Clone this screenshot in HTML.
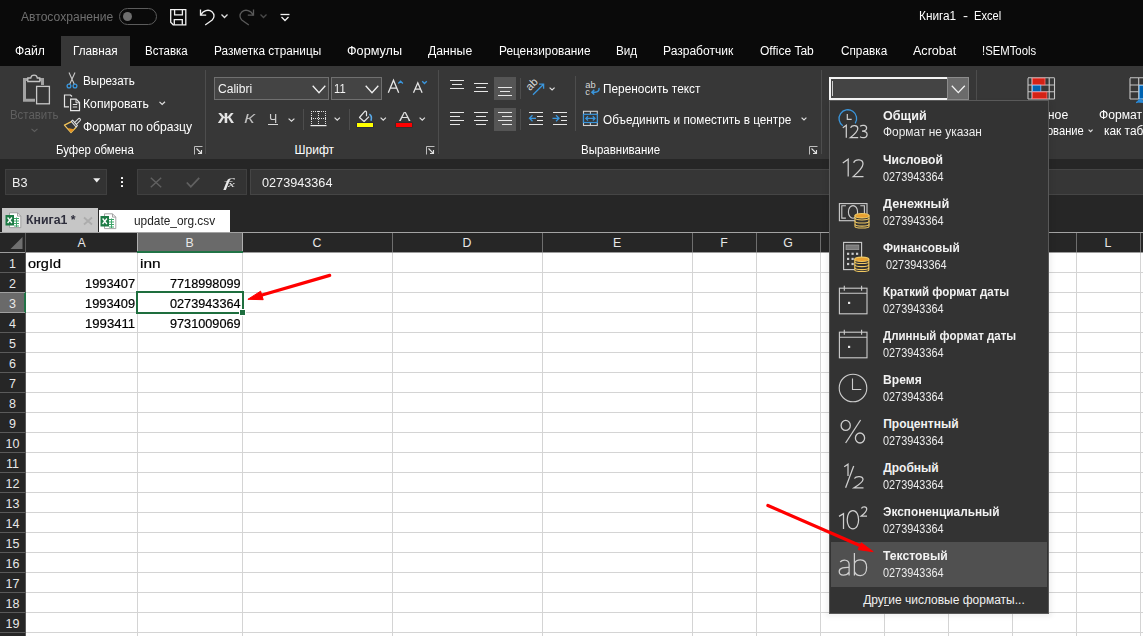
<!DOCTYPE html>
<html><head><meta charset="utf-8"><style>
html,body{margin:0;padding:0;width:1143px;height:636px;overflow:hidden;background:#0a0a0a;font-family:'Liberation Sans', sans-serif;}
svg{position:absolute;overflow:visible}
</style></head><body>
<div style="position:absolute;left:0px;top:0px;width:1143px;height:66px;background:#0a0a0a;"></div>
<div style="position:absolute;left:61px;top:36px;width:69px;height:30px;background:#373737;"></div>
<div style="position:absolute;left:0px;top:66px;width:1143px;height:93px;background:#373737;"></div>
<div style="position:absolute;left:0px;top:159px;width:1143px;height:73px;background:#262626;"></div>
<div style="position:absolute;left:119px;top:8px;width:38px;height:17px;background:transparent;box-sizing:border-box;border:1px solid #5c5c5c;border-radius:9px"></div>
<div style="position:absolute;left:122.5px;top:11.5px;width:9px;height:9px;background:#6e6e6e;border-radius:50%"></div>
<svg style="left:170px;top:9px;" width="17" height="17" viewBox="0 0 17 17"><path d="M0.7 0.7H15.8V15.8H3.2L0.7 13.3Z" fill="none" stroke="#f2f2f2" stroke-width="1.3"/><path d="M4.6 0.7V5.8H12.4V0.7" fill="none" stroke="#f2f2f2" stroke-width="1.3"/><path d="M4.3 15.8V10.6H12.3V15.8" fill="none" stroke="#f2f2f2" stroke-width="1.3"/></svg>
<svg style="left:199px;top:8px;" width="18" height="18" viewBox="0 0 18 18"><path d="M1.5 1.5V7.2H7.2" fill="none" stroke="#f2f2f2" stroke-width="1.3"/><path d="M1.8 7.2C3.8 2.5 9.5 0.8 13 3.8C15.8 6.5 15.5 9.8 13.2 12L6.2 17" fill="none" stroke="#f2f2f2" stroke-width="1.3"/></svg>
<svg style="left:221px;top:14px;" width="7" height="5" viewBox="0 0 7 5"><path d="M0.5 0.5L3.5 3.5L6.5 0.5" fill="none" stroke="#e0e0e0" stroke-width="1.3"/></svg>
<svg style="left:238px;top:8px;" width="18" height="18" viewBox="0 0 18 18"><path d="M15.5 1.5V7.2H9.8" fill="none" stroke="#5a5a5a" stroke-width="1.3"/><path d="M15.2 7.2C13.2 2.5 7.5 0.8 4 3.8C1.2 6.5 1.5 9.8 3.8 12L10.8 17" fill="none" stroke="#5a5a5a" stroke-width="1.3"/></svg>
<svg style="left:260px;top:14px;" width="7" height="5" viewBox="0 0 7 5"><path d="M0.5 0.5L3.5 3.5L6.5 0.5" fill="none" stroke="#4a4a4a" stroke-width="1.3"/></svg>
<svg style="left:280px;top:13px;" width="10" height="9" viewBox="0 0 10 9"><path d="M0.5 1.5H9.5" stroke="#f2f2f2" stroke-width="1.3"/><path d="M1.5 4L5 7.5L8.5 4" fill="none" stroke="#f2f2f2" stroke-width="1.3"/></svg>
<svg style="left:18px;top:70px;" width="40" height="40" viewBox="0 0 40 40"><path d="M17 30.3H6.5V9.5H24.5V15" fill="none" stroke="#a3a3a3" stroke-width="3"/><path d="M9.8 11.5V8H12.8C13.3 4.2 18.8 4.2 19.3 8H21.8V11.5Z" fill="#373737" stroke="#c4c4c4" stroke-width="1.3"/><rect x="18.6" y="16.4" width="12.8" height="17.4" fill="#373737" stroke="#c8c8c8" stroke-width="1.3"/></svg>
<svg style="left:31px;top:128px;" width="7" height="5" viewBox="0 0 7 5"><path d="M0.5 0.8L3.5 3.5L6.5 0.8" fill="none" stroke="#5f5f5f" stroke-width="1.1"/></svg>
<svg style="left:64px;top:71px;" width="16" height="19" viewBox="0 0 16 19"><path d="M5 1.5L10.3 13.3M11 1.5L5.7 13.3" stroke="#c8c8c8" stroke-width="1.1"/><circle cx="5" cy="15" r="1.9" fill="none" stroke="#3a96dd" stroke-width="1.3"/><circle cx="11" cy="15" r="1.9" fill="none" stroke="#3a96dd" stroke-width="1.3"/></svg>
<svg style="left:62px;top:93px;" width="20" height="20" viewBox="0 0 20 20"><path d="M7 13.8H2.5V2H8.5L10 3.5" fill="none" stroke="#e6e6e6" stroke-width="1.2"/><path d="M8.6 6.2H14.2L17.5 9.5V17.6H8.6Z" fill="#373737" stroke="#e6e6e6" stroke-width="1.2"/><path d="M14 6.2V9.8H17.5" fill="none" stroke="#e6e6e6" stroke-width="1"/><path d="M10.8 11.5H15.2M10.8 14H15.2" stroke="#e6e6e6" stroke-width="1"/></svg>
<svg style="left:159px;top:101px;" width="7" height="5" viewBox="0 0 7 5"><path d="M0.5 0.8L3.2 3.5L6 0.8" fill="none" stroke="#e0e0e0" stroke-width="1.2"/></svg>
<svg style="left:62px;top:114px;" width="22" height="22" viewBox="0 0 22 22"><path d="M9.4 7.6L2.4 11.1L9 18.6L14.3 13" fill="none" stroke="#f2c45a" stroke-width="1.2" stroke-linejoin="round"/><path d="M5.8 14L9 18.3L12 15.3Z" fill="#e8901a"/><path d="M9.3 7.4L10.6 6.1L15.4 11.7L14.1 13Z" fill="#373737" stroke="#dcdcdc" stroke-width="1.1" stroke-linejoin="round"/><path d="M12.3 8.9L16.3 4.9C16.8 4.4 17.6 4.4 18.1 4.9C18.6 5.4 18.6 6.2 18.1 6.7L14.1 10.7" fill="none" stroke="#dcdcdc" stroke-width="1.1"/></svg>
<svg style="left:194px;top:146px;" width="9" height="9" viewBox="0 0 9 9"><path d="M0.5 8.5V0.5H8.5" fill="none" stroke="#bdbdbd" stroke-width="1"/><path d="M2.5 2.5L7.5 7.5M4 7.5H7.5V4" fill="none" stroke="#e0e0e0" stroke-width="1.1"/></svg>
<div style="position:absolute;left:205px;top:70px;width:1px;height:84px;background:#4d4d4d;"></div>
<div style="position:absolute;left:214px;top:77px;width:115px;height:23px;background:#444444;box-sizing:border-box;border:1px solid #707070"></div>
<svg style="left:312px;top:85px;" width="14" height="9" viewBox="0 0 14 9"><path d="M0.7 0.8L7 7.8L13.3 0.8" fill="none" stroke="#f0f0f0" stroke-width="1.3"/></svg>
<div style="position:absolute;left:331px;top:77px;width:51px;height:23px;background:#444444;box-sizing:border-box;border:1px solid #707070"></div>
<svg style="left:365px;top:85px;" width="14" height="9" viewBox="0 0 14 9"><path d="M0.7 0.8L7 7.8L13.3 0.8" fill="none" stroke="#f0f0f0" stroke-width="1.3"/></svg>
<svg style="left:387px;top:79px;" width="18" height="15" viewBox="0 0 18 15"><path d="M1.3 13.8L6.5 1.2L11.7 13.8M3.3 9.2H9.7" fill="none" stroke="#e6e6e6" stroke-width="1.3"/><path d="M11.3 4.5L13.6 2.2L15.9 4.5" fill="none" stroke="#3a96dd" stroke-width="1.3"/></svg>
<svg style="left:412px;top:79px;" width="17" height="15" viewBox="0 0 17 15"><path d="M1.5 13.8L5.8 3.8L10.1 13.8M3.1 10.2H8.5" fill="none" stroke="#e6e6e6" stroke-width="1.3"/><path d="M10.2 2.2L12.5 4.5L14.8 2.2" fill="none" stroke="#3a96dd" stroke-width="1.3"/></svg>
<div style="position:absolute;left:268px;top:124px;width:10px;height:1.2px;background:#d8d8d8;"></div>
<svg style="left:287.5px;top:117.5px;" width="7" height="4" viewBox="0 0 7 4"><path d="M0.6 0.6L3.5 3.2L6.4 0.6" fill="none" stroke="#e0e0e0" stroke-width="1.2"/></svg>
<div style="position:absolute;left:303px;top:109px;width:1px;height:21px;background:#4d4d4d;"></div>
<svg style="left:310px;top:110px;" width="17" height="17" viewBox="0 0 17 17"><g fill="#e0e0e0"><rect x="1" y="1" width="1" height="1"/><rect x="1" y="1" width="1" height="1"/><rect x="15" y="1" width="1" height="1"/><rect x="1" y="8" width="1" height="1"/><rect x="8" y="1" width="1" height="1"/><rect x="3" y="1" width="1" height="1"/><rect x="1" y="3" width="1" height="1"/><rect x="15" y="3" width="1" height="1"/><rect x="3" y="8" width="1" height="1"/><rect x="8" y="3" width="1" height="1"/><rect x="5" y="1" width="1" height="1"/><rect x="1" y="5" width="1" height="1"/><rect x="15" y="5" width="1" height="1"/><rect x="5" y="8" width="1" height="1"/><rect x="8" y="5" width="1" height="1"/><rect x="7" y="1" width="1" height="1"/><rect x="1" y="7" width="1" height="1"/><rect x="15" y="7" width="1" height="1"/><rect x="7" y="8" width="1" height="1"/><rect x="8" y="7" width="1" height="1"/><rect x="9" y="1" width="1" height="1"/><rect x="1" y="9" width="1" height="1"/><rect x="15" y="9" width="1" height="1"/><rect x="9" y="8" width="1" height="1"/><rect x="8" y="9" width="1" height="1"/><rect x="11" y="1" width="1" height="1"/><rect x="1" y="11" width="1" height="1"/><rect x="15" y="11" width="1" height="1"/><rect x="11" y="8" width="1" height="1"/><rect x="8" y="11" width="1" height="1"/><rect x="13" y="1" width="1" height="1"/><rect x="1" y="13" width="1" height="1"/><rect x="15" y="13" width="1" height="1"/><rect x="13" y="8" width="1" height="1"/><rect x="8" y="13" width="1" height="1"/><rect x="15" y="1" width="1" height="1"/><rect x="1" y="15" width="1" height="1"/><rect x="15" y="15" width="1" height="1"/><rect x="15" y="8" width="1" height="1"/><rect x="8" y="15" width="1" height="1"/></g><rect x="0.5" y="15" width="16" height="1.2" fill="#f0f0f0"/></svg>
<svg style="left:333.8px;top:117.0px;" width="6.5" height="4" viewBox="0 0 6.5 4"><path d="M0.6 0.6L3.25 3.2L5.9 0.6" fill="none" stroke="#e0e0e0" stroke-width="1.2"/></svg>
<div style="position:absolute;left:349px;top:109px;width:1px;height:21px;background:#4d4d4d;"></div>
<svg style="left:352px;top:106px;" width="24" height="18" viewBox="0 0 24 18"><path d="M14.5 10.2V6.2C14.3 4.8 13 4.8 12.3 5.8L7.5 11.5L12.1 15.5L17 10.6" fill="none" stroke="#e4e4e4" stroke-width="1.2" stroke-linejoin="round"/><path d="M17.3 8.3C19.3 9.3 19.8 12 19 14.8" fill="none" stroke="#5aaae8" stroke-width="1.6"/></svg>
<div style="position:absolute;left:356.5px;top:122.8px;width:16.5px;height:4.2px;background:#ffff00;box-shadow:0 0 0 0.6px #24243a"></div>
<svg style="left:379.7px;top:117.0px;" width="6.5" height="4" viewBox="0 0 6.5 4"><path d="M0.6 0.6L3.25 3.2L5.9 0.6" fill="none" stroke="#e0e0e0" stroke-width="1.2"/></svg>
<div style="position:absolute;left:396px;top:122.8px;width:16px;height:4.2px;background:#ff0000;box-shadow:0 0 0 0.6px #3a2424"></div>
<svg style="left:418.9px;top:117.0px;" width="6.5" height="4" viewBox="0 0 6.5 4"><path d="M0.6 0.6L3.25 3.2L5.9 0.6" fill="none" stroke="#e0e0e0" stroke-width="1.2"/></svg>
<svg style="left:426px;top:146px;" width="9" height="9" viewBox="0 0 9 9"><path d="M0.5 8.5V0.5H8.5" fill="none" stroke="#bdbdbd" stroke-width="1"/><path d="M2.5 2.5L7.5 7.5M4 7.5H7.5V4" fill="none" stroke="#e0e0e0" stroke-width="1.1"/></svg>
<div style="position:absolute;left:438px;top:70px;width:1px;height:84px;background:#4d4d4d;"></div>
<div style="position:absolute;left:494px;top:77px;width:22px;height:23px;background:#555555;"></div>
<div style="position:absolute;left:494px;top:108px;width:22px;height:23px;background:#555555;"></div>
<div style="position:absolute;left:450px;top:79.7px;width:14px;height:1.2px;background:#e6e6e6;"></div>
<div style="position:absolute;left:452.2px;top:83.80000000000001px;width:9.800000000000011px;height:1.2px;background:#e6e6e6;"></div>
<div style="position:absolute;left:450px;top:87.80000000000001px;width:14px;height:1.2px;background:#e6e6e6;"></div>
<div style="position:absolute;left:474px;top:82.7px;width:14px;height:1.2px;background:#e6e6e6;"></div>
<div style="position:absolute;left:476.4px;top:86.80000000000001px;width:9.600000000000023px;height:1.2px;background:#e6e6e6;"></div>
<div style="position:absolute;left:474px;top:90.80000000000001px;width:14px;height:1.2px;background:#e6e6e6;"></div>
<div style="position:absolute;left:498px;top:86.80000000000001px;width:14px;height:1.2px;background:#e6e6e6;"></div>
<div style="position:absolute;left:500.4px;top:90.80000000000001px;width:9.600000000000023px;height:1.2px;background:#e6e6e6;"></div>
<div style="position:absolute;left:498px;top:94.80000000000001px;width:14px;height:1.2px;background:#e6e6e6;"></div>
<div style="position:absolute;left:520px;top:78px;width:1px;height:21px;background:#4d4d4d;"></div>
<svg style="left:526px;top:78px;" width="20" height="18" viewBox="0 0 20 18"><text x="0" y="0" transform="translate(4 13.2) rotate(-45)" font-family="Liberation Sans" font-size="11" fill="#dcdcdc">ab</text><path d="M7 16.8L17.6 6.2M13 6.2H17.6V10.8" fill="none" stroke="#3a96dd" stroke-width="1.3"/></svg>
<svg style="left:548.8px;top:86.5px;" width="6.2" height="3.8" viewBox="0 0 6.2 3.8"><path d="M0.6 0.6L3.1 3.0L5.6000000000000005 0.6" fill="none" stroke="#e0e0e0" stroke-width="1.2"/></svg>
<div style="position:absolute;left:450px;top:111.60000000000001px;width:14px;height:1.2px;background:#e6e6e6;"></div>
<div style="position:absolute;left:450px;top:115.7px;width:10px;height:1.2px;background:#e6e6e6;"></div>
<div style="position:absolute;left:450px;top:119.80000000000001px;width:14px;height:1.2px;background:#e6e6e6;"></div>
<div style="position:absolute;left:450px;top:123.80000000000001px;width:10px;height:1.2px;background:#e6e6e6;"></div>
<div style="position:absolute;left:474px;top:111.60000000000001px;width:14px;height:1.2px;background:#e6e6e6;"></div>
<div style="position:absolute;left:476.4px;top:115.7px;width:9.600000000000023px;height:1.2px;background:#e6e6e6;"></div>
<div style="position:absolute;left:474px;top:119.80000000000001px;width:14px;height:1.2px;background:#e6e6e6;"></div>
<div style="position:absolute;left:476.4px;top:123.80000000000001px;width:9.600000000000023px;height:1.2px;background:#e6e6e6;"></div>
<div style="position:absolute;left:498px;top:111.60000000000001px;width:14px;height:1.2px;background:#e6e6e6;"></div>
<div style="position:absolute;left:502px;top:115.7px;width:10px;height:1.2px;background:#e6e6e6;"></div>
<div style="position:absolute;left:498px;top:119.80000000000001px;width:14px;height:1.2px;background:#e6e6e6;"></div>
<div style="position:absolute;left:502px;top:123.80000000000001px;width:10px;height:1.2px;background:#e6e6e6;"></div>
<div style="position:absolute;left:520px;top:109px;width:1px;height:21px;background:#4d4d4d;"></div>
<div style="position:absolute;left:529px;top:111.60000000000001px;width:14px;height:1.2px;background:#e6e6e6;"></div>
<div style="position:absolute;left:537px;top:115.7px;width:6px;height:1.2px;background:#e6e6e6;"></div>
<div style="position:absolute;left:537px;top:119.80000000000001px;width:6px;height:1.2px;background:#e6e6e6;"></div>
<div style="position:absolute;left:529px;top:123.80000000000001px;width:14px;height:1.2px;background:#e6e6e6;"></div>
<div style="position:absolute;left:553px;top:111.60000000000001px;width:14px;height:1.2px;background:#e6e6e6;"></div>
<div style="position:absolute;left:561px;top:115.7px;width:6px;height:1.2px;background:#e6e6e6;"></div>
<div style="position:absolute;left:561px;top:119.80000000000001px;width:6px;height:1.2px;background:#e6e6e6;"></div>
<div style="position:absolute;left:553px;top:123.80000000000001px;width:14px;height:1.2px;background:#e6e6e6;"></div>
<svg style="left:528px;top:114px;" width="9" height="9" viewBox="0 0 9 9"><path d="M8 4.3H1.5M4.5 1.3L1.5 4.3L4.5 7.3" fill="none" stroke="#3a96dd" stroke-width="1.3"/></svg>
<svg style="left:552px;top:114px;" width="9" height="9" viewBox="0 0 9 9"><path d="M0.5 4.3H7M4 1.3L7 4.3L4 7.3" fill="none" stroke="#3a96dd" stroke-width="1.3"/></svg>
<div style="position:absolute;left:575px;top:76px;width:1px;height:55px;background:#4d4d4d;"></div>
<svg style="left:584px;top:80px;" width="18" height="18" viewBox="0 0 18 18"><text x="1.2" y="7.8" font-family="Liberation Sans" font-size="9.4" fill="#d6d6d6">ab</text><text x="1.2" y="15.2" font-family="Liberation Sans" font-size="9.4" fill="#d6d6d6">c</text><path d="M15 7.8C15.5 10.5 14 12.2 11 12.2H8.2M10.3 9.8L7.8 12.2L10.3 14.6" fill="none" stroke="#3a96dd" stroke-width="1.4"/></svg>
<svg style="left:582px;top:110px;" width="17" height="17" viewBox="0 0 17 17"><rect x="1.5" y="1.3" width="13.8" height="14.2" fill="none" stroke="#cfcfcf" stroke-width="1.1"/><path d="M8.4 1.3V4.3M8.4 12.5V15.5" stroke="#cfcfcf" stroke-width="1.1"/><rect x="1.5" y="4.3" width="13.8" height="8.2" fill="#373737" stroke="#3a96dd" stroke-width="1.2"/><path d="M3.8 8.4H13M6 6.3L3.8 8.4L6 10.5M10.8 6.3L13 8.4L10.8 10.5" fill="none" stroke="#3a96dd" stroke-width="1.2"/></svg>
<svg style="left:801.0px;top:117.0px;" width="6" height="3.8" viewBox="0 0 6 3.8"><path d="M0.6 0.6L3.0 3.0L5.4 0.6" fill="none" stroke="#e0e0e0" stroke-width="1.2"/></svg>
<svg style="left:809px;top:146px;" width="9" height="9" viewBox="0 0 9 9"><path d="M0.5 8.5V0.5H8.5" fill="none" stroke="#bdbdbd" stroke-width="1"/><path d="M2.5 2.5L7.5 7.5M4 7.5H7.5V4" fill="none" stroke="#e0e0e0" stroke-width="1.1"/></svg>
<div style="position:absolute;left:821px;top:70px;width:1px;height:84px;background:#4d4d4d;"></div>
<div style="position:absolute;left:829px;top:77px;width:140px;height:23px;background:#444444;box-sizing:border-box;border:2px solid #f4f4f4;border-right:none"></div>
<div style="position:absolute;left:947px;top:77px;width:22px;height:23px;background:#6b6b6b;box-sizing:border-box;border:1px solid #8c8c8c"></div>
<svg style="left:951px;top:85px;" width="15" height="9" viewBox="0 0 15 9"><path d="M0.8 0.8L7.3 7.6L13.8 0.8" fill="none" stroke="#f4f4f4" stroke-width="1.3"/></svg>
<div style="position:absolute;left:832px;top:81px;width:1px;height:15px;background:#d0d0d0;"></div>
<div style="position:absolute;left:976px;top:70px;width:1px;height:84px;background:#4d4d4d;"></div>
<svg style="left:1027px;top:76.5px;" width="29" height="23" viewBox="0 0 29 23"><path d="M1 1.2V22M5 1.2V22M22.2 1.2V22M27.5 1.2V22M1 0.7H27.5M1 8H27.5M1 14.8H27.5M1 22H27.5" fill="none" stroke="#c6c6c6" stroke-width="1.1"/><rect x="5.5" y="1.2" width="12.5" height="6.6" fill="#d42215" stroke="#ff7070" stroke-width="0.8"/><rect x="5.5" y="8.2" width="8.3" height="6.4" fill="#0063b1" stroke="#7cc4ff" stroke-width="0.8"/><rect x="5.5" y="15" width="14.4" height="6.6" fill="#d42215" stroke="#ff7070" stroke-width="0.8"/></svg>
<svg style="left:1087.8px;top:128.7px;" width="5.2" height="3.4" viewBox="0 0 5.2 3.4"><path d="M0.6 0.6L2.6 2.6L4.6000000000000005 0.6" fill="none" stroke="#e0e0e0" stroke-width="1.2"/></svg>
<svg style="left:1128.5px;top:76.5px;" width="20" height="28" viewBox="0 0 20 28"><path d="M1 1.2V22M9.7 1.2V22M1 0.8H20M1 8H20M1 14.8H20M1 22H20" fill="none" stroke="#c6c6c6" stroke-width="1.1"/><rect x="10.2" y="8.4" width="10" height="13.4" fill="#0063b1" stroke="#7cc4ff" stroke-width="0.8"/><path d="M7 25.6C9 25.5 9.5 23 11 22.5C12.5 22 13.5 24 15 26" fill="#2a8ad8" stroke="#2a8ad8" stroke-width="1.4"/></svg>
<div style="position:absolute;left:5px;top:169px;width:102px;height:26px;background:#333333;box-sizing:border-box;border:1px solid #404040"></div>
<svg style="left:92.8px;top:178.3px;" width="8" height="5" viewBox="0 0 8 5"><path d="M0.2 0.2H7.3L3.75 4.5Z" fill="#f0f0f0"/></svg>
<div style="position:absolute;left:121px;top:177px;width:2.2px;height:2.2px;background:#ffffff;border-radius:0.5px"></div>
<div style="position:absolute;left:121px;top:181px;width:2.2px;height:2.2px;background:#ffffff;border-radius:0.5px"></div>
<div style="position:absolute;left:121px;top:185px;width:2.2px;height:2.2px;background:#ffffff;border-radius:0.5px"></div>
<div style="position:absolute;left:137px;top:169px;width:110px;height:26px;background:#333333;box-sizing:border-box;border:1px solid #404040"></div>
<svg style="left:150px;top:176.5px;" width="12" height="11" viewBox="0 0 12 11"><path d="M0.8 0.8L11.2 10.2M11.2 0.8L0.8 10.2" stroke="#616161" stroke-width="1.4"/></svg>
<svg style="left:186px;top:176.5px;" width="14" height="11" viewBox="0 0 14 11"><path d="M0.8 5.5L4.8 9.8L13.2 0.8" fill="none" stroke="#616161" stroke-width="1.8"/></svg>
<div style="position:absolute;left:250px;top:169px;width:900px;height:26px;background:#363636;box-sizing:border-box;border:1px solid #454545"></div>
<div style="position:absolute;left:2px;top:208px;width:96px;height:24px;background:#c6c6c6;"></div>
<div style="position:absolute;left:99px;top:210px;width:131px;height:22px;background:#ffffff;"></div>
<svg style="left:5px;top:211.5px;" width="17" height="17" viewBox="0 0 17 17"><path d="M4.5 0.8H12.5L15.8 4.1V15.6H4.5Z" fill="#ffffff" stroke="#9a9a9a" stroke-width="0.9"/><path d="M12.5 0.8V4.1H15.8" fill="none" stroke="#9a9a9a" stroke-width="0.9"/><path d="M9 6.5H14M9 9H14M9 11.5H14M9 14H14M11.5 5.5V15" stroke="#3fa56a" stroke-width="1"/><rect x="0.5" y="3" width="8.5" height="10.5" fill="#1d7b45"/><path d="M2.6 5.5L6.9 11M6.9 5.5L2.6 11" stroke="#ffffff" stroke-width="1.3"/></svg>
<svg style="left:82.5px;top:216.5px;" width="10" height="8" viewBox="0 0 10 8"><path d="M1 0.5L9 7.5M9 0.5L1 7.5" stroke="#acacac" stroke-width="1.8"/></svg>
<svg style="left:100px;top:212.5px;" width="17" height="17" viewBox="0 0 17 17"><path d="M4.5 0.8H12.5L15.8 4.1V15.6H4.5Z" fill="#ffffff" stroke="#9a9a9a" stroke-width="0.9"/><path d="M12.5 0.8V4.1H15.8" fill="none" stroke="#9a9a9a" stroke-width="0.9"/><path d="M9 6.5H14M9 9H14M9 11.5H14M9 14H14M11.5 5.5V15" stroke="#3fa56a" stroke-width="1"/><rect x="0.5" y="3" width="8.5" height="10.5" fill="#1d7b45"/><path d="M2.6 5.5L6.9 11M6.9 5.5L2.6 11" stroke="#ffffff" stroke-width="1.3"/></svg>
<div style="position:absolute;left:0px;top:232px;width:1143px;height:1px;background:#a3a3a3;"></div>
<div style="position:absolute;left:0px;top:233px;width:1143px;height:19px;background:#262626;"></div>
<div style="position:absolute;left:0px;top:252px;width:1143px;height:1px;background:#9c9c9c;"></div>
<svg style="left:10px;top:236px;" width="13" height="14" viewBox="0 0 13 14"><path d="M12.5 1V13H0.5Z" fill="#6f6f6f"/></svg>
<div style="position:absolute;left:25px;top:233px;width:1px;height:403px;background:#5a5a5a;"></div>
<div style="position:absolute;left:137px;top:233px;width:105px;height:19px;background:#6a6a6a;"></div>
<div style="position:absolute;left:26px;width:111px;top:237.19px;font-size:12.3px;line-height:12.3px;text-align:center;color:#e8e8e8">A</div>
<div style="position:absolute;left:137px;top:233px;width:1px;height:19px;background:#b0b0b0;"></div>
<div style="position:absolute;left:137px;width:105px;top:237.19px;font-size:12.3px;line-height:12.3px;text-align:center;color:#e8e8e8">B</div>
<div style="position:absolute;left:242px;top:233px;width:1px;height:19px;background:#b0b0b0;"></div>
<div style="position:absolute;left:242px;width:150px;top:237.19px;font-size:12.3px;line-height:12.3px;text-align:center;color:#e8e8e8">C</div>
<div style="position:absolute;left:392px;top:233px;width:1px;height:19px;background:#6e6e6e;"></div>
<div style="position:absolute;left:392px;width:150px;top:237.19px;font-size:12.3px;line-height:12.3px;text-align:center;color:#e8e8e8">D</div>
<div style="position:absolute;left:542px;top:233px;width:1px;height:19px;background:#6e6e6e;"></div>
<div style="position:absolute;left:542px;width:150px;top:237.19px;font-size:12.3px;line-height:12.3px;text-align:center;color:#e8e8e8">E</div>
<div style="position:absolute;left:692px;top:233px;width:1px;height:19px;background:#6e6e6e;"></div>
<div style="position:absolute;left:692px;width:64px;top:237.19px;font-size:12.3px;line-height:12.3px;text-align:center;color:#e8e8e8">F</div>
<div style="position:absolute;left:756px;top:233px;width:1px;height:19px;background:#6e6e6e;"></div>
<div style="position:absolute;left:756px;width:64px;top:237.19px;font-size:12.3px;line-height:12.3px;text-align:center;color:#e8e8e8">G</div>
<div style="position:absolute;left:820px;top:233px;width:1px;height:19px;background:#6e6e6e;"></div>
<div style="position:absolute;left:820px;width:64px;top:237.19px;font-size:12.3px;line-height:12.3px;text-align:center;color:#e8e8e8">H</div>
<div style="position:absolute;left:884px;top:233px;width:1px;height:19px;background:#6e6e6e;"></div>
<div style="position:absolute;left:884px;width:64px;top:237.19px;font-size:12.3px;line-height:12.3px;text-align:center;color:#e8e8e8">I</div>
<div style="position:absolute;left:948px;top:233px;width:1px;height:19px;background:#6e6e6e;"></div>
<div style="position:absolute;left:948px;width:64px;top:237.19px;font-size:12.3px;line-height:12.3px;text-align:center;color:#e8e8e8">J</div>
<div style="position:absolute;left:1012px;top:233px;width:1px;height:19px;background:#6e6e6e;"></div>
<div style="position:absolute;left:1012px;width:64px;top:237.19px;font-size:12.3px;line-height:12.3px;text-align:center;color:#e8e8e8">K</div>
<div style="position:absolute;left:1076px;top:233px;width:1px;height:19px;background:#6e6e6e;"></div>
<div style="position:absolute;left:1076px;width:64px;top:237.19px;font-size:12.3px;line-height:12.3px;text-align:center;color:#e8e8e8">L</div>
<div style="position:absolute;left:1140px;top:233px;width:1px;height:19px;background:#6e6e6e;"></div>
<div style="position:absolute;left:1140px;width:64px;top:237.19px;font-size:12.3px;line-height:12.3px;text-align:center;color:#e8e8e8">M</div>
<div style="position:absolute;left:137px;top:251px;width:106px;height:2px;background:#217346;"></div>
<div style="position:absolute;left:26px;top:253px;width:1117px;height:383px;background:#ffffff;"></div>
<div style="position:absolute;left:137px;top:253px;width:1px;height:383px;background:#d4d4d4;"></div>
<div style="position:absolute;left:242px;top:253px;width:1px;height:383px;background:#d4d4d4;"></div>
<div style="position:absolute;left:392px;top:253px;width:1px;height:383px;background:#d4d4d4;"></div>
<div style="position:absolute;left:542px;top:253px;width:1px;height:383px;background:#d4d4d4;"></div>
<div style="position:absolute;left:692px;top:253px;width:1px;height:383px;background:#d4d4d4;"></div>
<div style="position:absolute;left:756px;top:253px;width:1px;height:383px;background:#d4d4d4;"></div>
<div style="position:absolute;left:820px;top:253px;width:1px;height:383px;background:#d4d4d4;"></div>
<div style="position:absolute;left:884px;top:253px;width:1px;height:383px;background:#d4d4d4;"></div>
<div style="position:absolute;left:948px;top:253px;width:1px;height:383px;background:#d4d4d4;"></div>
<div style="position:absolute;left:1012px;top:253px;width:1px;height:383px;background:#d4d4d4;"></div>
<div style="position:absolute;left:1076px;top:253px;width:1px;height:383px;background:#d4d4d4;"></div>
<div style="position:absolute;left:1140px;top:253px;width:1px;height:383px;background:#d4d4d4;"></div>
<div style="position:absolute;left:26px;top:272px;width:1117px;height:1px;background:#d4d4d4;"></div>
<div style="position:absolute;left:26px;top:292px;width:1117px;height:1px;background:#d4d4d4;"></div>
<div style="position:absolute;left:26px;top:312px;width:1117px;height:1px;background:#d4d4d4;"></div>
<div style="position:absolute;left:26px;top:332px;width:1117px;height:1px;background:#d4d4d4;"></div>
<div style="position:absolute;left:26px;top:352px;width:1117px;height:1px;background:#d4d4d4;"></div>
<div style="position:absolute;left:26px;top:372px;width:1117px;height:1px;background:#d4d4d4;"></div>
<div style="position:absolute;left:26px;top:392px;width:1117px;height:1px;background:#d4d4d4;"></div>
<div style="position:absolute;left:26px;top:412px;width:1117px;height:1px;background:#d4d4d4;"></div>
<div style="position:absolute;left:26px;top:432px;width:1117px;height:1px;background:#d4d4d4;"></div>
<div style="position:absolute;left:26px;top:452px;width:1117px;height:1px;background:#d4d4d4;"></div>
<div style="position:absolute;left:26px;top:472px;width:1117px;height:1px;background:#d4d4d4;"></div>
<div style="position:absolute;left:26px;top:492px;width:1117px;height:1px;background:#d4d4d4;"></div>
<div style="position:absolute;left:26px;top:512px;width:1117px;height:1px;background:#d4d4d4;"></div>
<div style="position:absolute;left:26px;top:532px;width:1117px;height:1px;background:#d4d4d4;"></div>
<div style="position:absolute;left:26px;top:552px;width:1117px;height:1px;background:#d4d4d4;"></div>
<div style="position:absolute;left:26px;top:572px;width:1117px;height:1px;background:#d4d4d4;"></div>
<div style="position:absolute;left:26px;top:592px;width:1117px;height:1px;background:#d4d4d4;"></div>
<div style="position:absolute;left:26px;top:612px;width:1117px;height:1px;background:#d4d4d4;"></div>
<div style="position:absolute;left:26px;top:632px;width:1117px;height:1px;background:#d4d4d4;"></div>
<div style="position:absolute;left:26px;top:652px;width:1117px;height:1px;background:#d4d4d4;"></div>
<div style="position:absolute;left:0px;top:253px;width:25px;height:383px;background:#262626;"></div>
<div style="position:absolute;left:0px;top:293px;width:24px;height:19px;background:#6a6a6a;"></div>
<div style="position:absolute;left:24px;top:292px;width:2px;height:21px;background:#217346;"></div>
<div style="position:absolute;left:0px;top:272px;width:25px;height:1px;background:#5a5a5a;"></div>
<div style="position:absolute;left:0px;top:292px;width:25px;height:1px;background:#a0a0a0;"></div>
<div style="position:absolute;left:0px;top:312px;width:25px;height:1px;background:#a0a0a0;"></div>
<div style="position:absolute;left:0px;top:332px;width:25px;height:1px;background:#5a5a5a;"></div>
<div style="position:absolute;left:0px;top:352px;width:25px;height:1px;background:#5a5a5a;"></div>
<div style="position:absolute;left:0px;top:372px;width:25px;height:1px;background:#5a5a5a;"></div>
<div style="position:absolute;left:0px;top:392px;width:25px;height:1px;background:#5a5a5a;"></div>
<div style="position:absolute;left:0px;top:412px;width:25px;height:1px;background:#5a5a5a;"></div>
<div style="position:absolute;left:0px;top:432px;width:25px;height:1px;background:#5a5a5a;"></div>
<div style="position:absolute;left:0px;top:452px;width:25px;height:1px;background:#5a5a5a;"></div>
<div style="position:absolute;left:0px;top:472px;width:25px;height:1px;background:#5a5a5a;"></div>
<div style="position:absolute;left:0px;top:492px;width:25px;height:1px;background:#5a5a5a;"></div>
<div style="position:absolute;left:0px;top:512px;width:25px;height:1px;background:#5a5a5a;"></div>
<div style="position:absolute;left:0px;top:532px;width:25px;height:1px;background:#5a5a5a;"></div>
<div style="position:absolute;left:0px;top:552px;width:25px;height:1px;background:#5a5a5a;"></div>
<div style="position:absolute;left:0px;top:572px;width:25px;height:1px;background:#5a5a5a;"></div>
<div style="position:absolute;left:0px;top:592px;width:25px;height:1px;background:#5a5a5a;"></div>
<div style="position:absolute;left:0px;top:612px;width:25px;height:1px;background:#5a5a5a;"></div>
<div style="position:absolute;left:0px;top:632px;width:25px;height:1px;background:#5a5a5a;"></div>
<div style="position:absolute;left:0;width:25px;top:257.72px;font-size:12.5px;line-height:12.5px;text-align:center;color:#e8e8e8">1</div>
<div style="position:absolute;left:0;width:25px;top:277.72px;font-size:12.5px;line-height:12.5px;text-align:center;color:#e8e8e8">2</div>
<div style="position:absolute;left:0;width:25px;top:297.72px;font-size:12.5px;line-height:12.5px;text-align:center;color:#e8e8e8">3</div>
<div style="position:absolute;left:0;width:25px;top:317.72px;font-size:12.5px;line-height:12.5px;text-align:center;color:#e8e8e8">4</div>
<div style="position:absolute;left:0;width:25px;top:337.72px;font-size:12.5px;line-height:12.5px;text-align:center;color:#e8e8e8">5</div>
<div style="position:absolute;left:0;width:25px;top:357.72px;font-size:12.5px;line-height:12.5px;text-align:center;color:#e8e8e8">6</div>
<div style="position:absolute;left:0;width:25px;top:377.72px;font-size:12.5px;line-height:12.5px;text-align:center;color:#e8e8e8">7</div>
<div style="position:absolute;left:0;width:25px;top:397.72px;font-size:12.5px;line-height:12.5px;text-align:center;color:#e8e8e8">8</div>
<div style="position:absolute;left:0;width:25px;top:417.72px;font-size:12.5px;line-height:12.5px;text-align:center;color:#e8e8e8">9</div>
<div style="position:absolute;left:0;width:25px;top:437.72px;font-size:12.5px;line-height:12.5px;text-align:center;color:#e8e8e8">10</div>
<div style="position:absolute;left:0;width:25px;top:457.72px;font-size:12.5px;line-height:12.5px;text-align:center;color:#e8e8e8">11</div>
<div style="position:absolute;left:0;width:25px;top:477.72px;font-size:12.5px;line-height:12.5px;text-align:center;color:#e8e8e8">12</div>
<div style="position:absolute;left:0;width:25px;top:497.72px;font-size:12.5px;line-height:12.5px;text-align:center;color:#e8e8e8">13</div>
<div style="position:absolute;left:0;width:25px;top:517.72px;font-size:12.5px;line-height:12.5px;text-align:center;color:#e8e8e8">14</div>
<div style="position:absolute;left:0;width:25px;top:537.72px;font-size:12.5px;line-height:12.5px;text-align:center;color:#e8e8e8">15</div>
<div style="position:absolute;left:0;width:25px;top:557.72px;font-size:12.5px;line-height:12.5px;text-align:center;color:#e8e8e8">16</div>
<div style="position:absolute;left:0;width:25px;top:577.72px;font-size:12.5px;line-height:12.5px;text-align:center;color:#e8e8e8">17</div>
<div style="position:absolute;left:0;width:25px;top:597.72px;font-size:12.5px;line-height:12.5px;text-align:center;color:#e8e8e8">18</div>
<div style="position:absolute;left:0;width:25px;top:617.72px;font-size:12.5px;line-height:12.5px;text-align:center;color:#e8e8e8">19</div>
<div style="position:absolute;left:0;width:25px;top:637.72px;font-size:12.5px;line-height:12.5px;text-align:center;color:#e8e8e8">20</div>
<div style="position:absolute;left:136px;top:291px;width:108px;height:23px;background:transparent;box-sizing:border-box;border:2px solid #1e6e3e"></div>
<div style="position:absolute;left:240px;top:310px;width:5px;height:5px;background:#1e6e3e;box-shadow:0 0 0 1px #fff"></div>
<div id="t0" style="position:absolute;left:21px;top:10.84px;font-size:12px;line-height:12px;color:#6e6e6e;white-space:nowrap;transform:scaleX(1.0079);transform-origin:0 0;">Автосохранение</div>
<div id="t1" style="position:absolute;left:919px;top:9.84px;font-size:12px;line-height:12px;color:#fff;white-space:nowrap;transform:scaleX(0.9841);transform-origin:0 0;">Книга1</div>
<div id="t2" style="position:absolute;left:963px;top:9.84px;font-size:12px;line-height:12px;color:#fff;white-space:nowrap;transform:scaleX(1.2500);transform-origin:0 0;">-</div>
<div id="t3" style="position:absolute;left:973.5px;top:9.84px;font-size:12px;line-height:12px;color:#fff;white-space:nowrap;transform:scaleX(0.9238);transform-origin:0 0;">Excel</div>
<div id="t4" style="position:absolute;left:15px;top:45.34px;font-size:12px;line-height:12px;color:#fff;white-space:nowrap;transform:scaleX(1.0136);transform-origin:0 0;">Файл</div>
<div id="t5" style="position:absolute;left:73px;top:45.34px;font-size:12px;line-height:12px;color:#fff;white-space:nowrap;transform:scaleX(0.9778);transform-origin:0 0;">Главная</div>
<div id="t6" style="position:absolute;left:144.5px;top:45.34px;font-size:12px;line-height:12px;color:#fff;white-space:nowrap;transform:scaleX(0.9560);transform-origin:0 0;">Вставка</div>
<div id="t7" style="position:absolute;left:213.5px;top:45.34px;font-size:12px;line-height:12px;color:#fff;white-space:nowrap;transform:scaleX(0.9844);transform-origin:0 0;">Разметка страницы</div>
<div id="t8" style="position:absolute;left:347.2px;top:45.34px;font-size:12px;line-height:12px;color:#fff;white-space:nowrap;transform:scaleX(1.0545);transform-origin:0 0;">Формулы</div>
<div id="t9" style="position:absolute;left:428px;top:45.34px;font-size:12px;line-height:12px;color:#fff;white-space:nowrap;transform:scaleX(1.0199);transform-origin:0 0;">Данные</div>
<div id="t10" style="position:absolute;left:498.7px;top:45.34px;font-size:12px;line-height:12px;color:#fff;white-space:nowrap;transform:scaleX(0.9872);transform-origin:0 0;">Рецензирование</div>
<div id="t11" style="position:absolute;left:616px;top:45.34px;font-size:12px;line-height:12px;color:#fff;white-space:nowrap;transform:scaleX(0.9747);transform-origin:0 0;">Вид</div>
<div id="t12" style="position:absolute;left:663px;top:45.34px;font-size:12px;line-height:12px;color:#fff;white-space:nowrap;transform:scaleX(1.0031);transform-origin:0 0;">Разработчик</div>
<div id="t13" style="position:absolute;left:760px;top:45.34px;font-size:12px;line-height:12px;color:#fff;white-space:nowrap;transform:scaleX(1.0039);transform-origin:0 0;">Office Tab</div>
<div id="t14" style="position:absolute;left:840.5px;top:45.34px;font-size:12px;line-height:12px;color:#fff;white-space:nowrap;transform:scaleX(0.9809);transform-origin:0 0;">Справка</div>
<div id="t15" style="position:absolute;left:913px;top:45.34px;font-size:12px;line-height:12px;color:#fff;white-space:nowrap;transform:scaleX(1.0458);transform-origin:0 0;">Acrobat</div>
<div id="t16" style="position:absolute;left:982px;top:45.34px;font-size:12px;line-height:12px;color:#fff;white-space:nowrap;transform:scaleX(0.9437);transform-origin:0 0;">!SEMTools</div>
<div id="t17" style="position:absolute;left:10.3px;top:108.84px;font-size:12px;line-height:12px;color:#5f5f5f;white-space:nowrap;transform:scaleX(0.9522);transform-origin:0 0;">Вставить</div>
<div id="t18" style="position:absolute;left:83.2px;top:75.14px;font-size:12px;line-height:12px;color:#fff;white-space:nowrap;transform:scaleX(0.9698);transform-origin:0 0;">Вырезать</div>
<div id="t19" style="position:absolute;left:83.2px;top:98.04px;font-size:12px;line-height:12px;color:#fff;white-space:nowrap;transform:scaleX(1.0185);transform-origin:0 0;">Копировать</div>
<div id="t20" style="position:absolute;left:83.2px;top:121.14px;font-size:12px;line-height:12px;color:#fff;white-space:nowrap;transform:scaleX(1.0131);transform-origin:0 0;">Формат по образцу</div>
<div id="t21" style="position:absolute;left:56.2px;top:144.14px;font-size:12px;line-height:12px;color:#fff;white-space:nowrap;transform:scaleX(0.9534);transform-origin:0 0;">Буфер обмена</div>
<div id="t22" style="position:absolute;left:217.8px;top:83.14px;font-size:12px;line-height:12px;color:#f4f4f4;white-space:nowrap;transform:scaleX(1.0056);transform-origin:0 0;">Calibri</div>
<div id="t23" style="position:absolute;left:334.4px;top:83.14px;font-size:12px;line-height:12px;color:#f4f4f4;white-space:nowrap;transform:scaleX(0.9318);transform-origin:0 0;">11</div>
<div id="t24" style="position:absolute;left:217.9px;top:111.35px;font-size:14px;line-height:14px;color:#e4e4e4;font-weight:bold;white-space:nowrap;transform:scaleX(1.2526);transform-origin:0 0;">Ж</div>
<div id="t25" style="position:absolute;left:244.3px;top:111.77px;font-size:13.5px;line-height:13.5px;color:#bdbdbd;white-space:nowrap;transform:scaleX(1.3598);transform-origin:0 0;font-style:italic;">К</div>
<div id="t26" style="position:absolute;left:269.2px;top:111.77px;font-size:13.5px;line-height:13.5px;color:#d0d0d0;white-space:nowrap;transform:scaleX(0.9150);transform-origin:0 0;">Ч</div>
<div id="t27" style="position:absolute;left:399.2px;top:110.27px;font-size:13.5px;line-height:13.5px;color:#e0e0e0;white-space:nowrap;transform:scaleX(1.2784);transform-origin:0 0;">A</div>
<div id="t28" style="position:absolute;left:294.5px;top:144.14px;font-size:12px;line-height:12px;color:#fff;white-space:nowrap;">Шрифт</div>
<div id="t29" style="position:absolute;left:602.6px;top:83.14px;font-size:12px;line-height:12px;color:#fff;white-space:nowrap;transform:scaleX(0.9871);transform-origin:0 0;">Переносить текст</div>
<div id="t30" style="position:absolute;left:602.6px;top:114.34px;font-size:12px;line-height:12px;color:#fff;white-space:nowrap;transform:scaleX(0.9819);transform-origin:0 0;">Объединить и поместить в центре</div>
<div id="t31" style="position:absolute;left:581.2px;top:144.34px;font-size:12px;line-height:12px;color:#fff;white-space:nowrap;transform:scaleX(0.9581);transform-origin:0 0;">Выравнивание</div>
<div id="t32" style="position:absolute;left:1014px;top:109.04px;font-size:12px;line-height:12px;color:#ffffff;white-space:nowrap;transform:scaleX(1.0235);transform-origin:0 0;">Условное</div>
<div id="t33" style="position:absolute;left:994px;top:124.64px;font-size:12px;line-height:12px;color:#ffffff;white-space:nowrap;transform:scaleX(0.9321);transform-origin:0 0;">форматирование</div>
<div id="t34" style="position:absolute;left:1099.3px;top:109.04px;font-size:12px;line-height:12px;color:#fff;white-space:nowrap;transform:scaleX(1.0111);transform-origin:0 0;">Формат</div>
<div id="t35" style="position:absolute;left:1104.4px;top:124.64px;font-size:12px;line-height:12px;color:#fff;white-space:nowrap;transform:scaleX(0.9920);transform-origin:0 0;">как таблицу</div>
<div id="t36" style="position:absolute;left:12.3px;top:176.84px;font-size:12px;line-height:12px;color:#f0f0f0;white-space:nowrap;transform:scaleX(1.0602);transform-origin:0 0;">B3</div>
<div id="t37" style="position:absolute;left:223px;top:176.00px;font-size:13px;line-height:13px;color:#e8e8e8;white-space:nowrap;transform:scaleX(2.3656);transform-origin:0 0;font-family:'Liberation Serif';font-style:italic;">f</div>
<div id="t38" style="position:absolute;left:228.3px;top:179.88px;font-size:9px;line-height:9px;color:#e8e8e8;white-space:nowrap;transform:scaleX(1.7097);transform-origin:0 0;font-family:'Liberation Serif';font-style:italic;">x</div>
<div id="t39" style="position:absolute;left:262.2px;top:177.04px;font-size:12px;line-height:12px;color:#f4f4f4;white-space:nowrap;transform:scaleX(1.0557);transform-origin:0 0;">0273943364</div>
<div id="t40" style="position:absolute;left:25.7px;top:214.04px;font-size:12px;line-height:12px;color:#2e2e3c;font-weight:bold;white-space:nowrap;transform:scaleX(1.0252);transform-origin:0 0;">Книга1 *</div>
<div id="t41" style="position:absolute;left:134.2px;top:215.04px;font-size:12px;line-height:12px;color:#222222;white-space:nowrap;transform:scaleX(0.9893);transform-origin:0 0;">update_org.csv</div>
<div id="t42" style="position:absolute;left:28px;top:257.79px;font-size:12.3px;line-height:12.3px;color:#000;white-space:nowrap;transform:scaleX(1.1753);transform-origin:0 0;-webkit-text-stroke:0.2px #000;">orgId</div>
<div id="t43" style="position:absolute;left:139.5px;top:257.79px;font-size:12.3px;line-height:12.3px;color:#000;white-space:nowrap;transform:scaleX(1.2507);transform-origin:0 0;-webkit-text-stroke:0.2px #000;">inn</div>
<div id="t44" style="position:absolute;left:85px;top:277.79px;font-size:12.3px;line-height:12.3px;color:#000;white-space:nowrap;transform:scaleX(1.0462);transform-origin:0 0;-webkit-text-stroke:0.2px #000;">1993407</div>
<div id="t45" style="position:absolute;left:170.4px;top:277.79px;font-size:12.3px;line-height:12.3px;color:#000;white-space:nowrap;transform:scaleX(1.0319);transform-origin:0 0;-webkit-text-stroke:0.2px #000;">7718998099</div>
<div id="t46" style="position:absolute;left:85px;top:297.79px;font-size:12.3px;line-height:12.3px;color:#000;white-space:nowrap;transform:scaleX(1.0462);transform-origin:0 0;-webkit-text-stroke:0.2px #000;">1993409</div>
<div id="t47" style="position:absolute;left:170.4px;top:297.79px;font-size:12.3px;line-height:12.3px;color:#000;white-space:nowrap;transform:scaleX(1.0319);transform-origin:0 0;-webkit-text-stroke:0.2px #000;">0273943364</div>
<div id="t48" style="position:absolute;left:85px;top:317.79px;font-size:12.3px;line-height:12.3px;color:#000;white-space:nowrap;transform:scaleX(1.0669);transform-origin:0 0;-webkit-text-stroke:0.2px #000;">1993411</div>
<div id="t49" style="position:absolute;left:170.4px;top:317.79px;font-size:12.3px;line-height:12.3px;color:#000;white-space:nowrap;transform:scaleX(1.0319);transform-origin:0 0;-webkit-text-stroke:0.2px #000;">9731009069</div>
<div id="t50" style="position:absolute;left:883.2px;top:109.84px;font-size:12px;line-height:12px;color:#f2f2f2;font-weight:bold;white-space:nowrap;transform:scaleX(1.0489);transform-origin:0 0;z-index:11;">Общий</div>
<div id="t51" style="position:absolute;left:883.2px;top:126.34px;font-size:12px;line-height:12px;color:#ececec;white-space:nowrap;transform:scaleX(0.9944);transform-origin:0 0;z-index:11;">Формат не указан</div>
<div id="t52" style="position:absolute;left:883.2px;top:153.84px;font-size:12px;line-height:12px;color:#f2f2f2;font-weight:bold;white-space:nowrap;transform:scaleX(1.0137);transform-origin:0 0;z-index:11;">Числовой</div>
<div id="t53" style="position:absolute;left:883.2px;top:171.04px;font-size:12px;line-height:12px;color:#ececec;white-space:nowrap;transform:scaleX(0.9077);transform-origin:0 0;z-index:11;">0273943364</div>
<div id="t54" style="position:absolute;left:883.2px;top:197.84px;font-size:12px;line-height:12px;color:#f2f2f2;font-weight:bold;white-space:nowrap;transform:scaleX(1.0601);transform-origin:0 0;z-index:11;">Денежный</div>
<div id="t55" style="position:absolute;left:883.2px;top:215.04px;font-size:12px;line-height:12px;color:#ececec;white-space:nowrap;transform:scaleX(0.9077);transform-origin:0 0;z-index:11;">0273943364</div>
<div id="t56" style="position:absolute;left:883.2px;top:241.84px;font-size:12px;line-height:12px;color:#f2f2f2;font-weight:bold;white-space:nowrap;transform:scaleX(0.9857);transform-origin:0 0;z-index:11;">Финансовый</div>
<div id="t57" style="position:absolute;left:886.2px;top:259.04px;font-size:12px;line-height:12px;color:#ececec;white-space:nowrap;transform:scaleX(0.9077);transform-origin:0 0;z-index:11;">0273943364</div>
<div id="t58" style="position:absolute;left:883.2px;top:285.84px;font-size:12px;line-height:12px;color:#f2f2f2;font-weight:bold;white-space:nowrap;transform:scaleX(0.9617);transform-origin:0 0;z-index:11;">Краткий формат даты</div>
<div id="t59" style="position:absolute;left:883.2px;top:303.04px;font-size:12px;line-height:12px;color:#ececec;white-space:nowrap;transform:scaleX(0.9077);transform-origin:0 0;z-index:11;">0273943364</div>
<div id="t60" style="position:absolute;left:883.2px;top:329.84px;font-size:12px;line-height:12px;color:#f2f2f2;font-weight:bold;white-space:nowrap;transform:scaleX(0.9588);transform-origin:0 0;z-index:11;">Длинный формат даты</div>
<div id="t61" style="position:absolute;left:883.2px;top:347.04px;font-size:12px;line-height:12px;color:#ececec;white-space:nowrap;transform:scaleX(0.9077);transform-origin:0 0;z-index:11;">0273943364</div>
<div id="t62" style="position:absolute;left:883.2px;top:373.84px;font-size:12px;line-height:12px;color:#f2f2f2;font-weight:bold;white-space:nowrap;transform:scaleX(1.0083);transform-origin:0 0;z-index:11;">Время</div>
<div id="t63" style="position:absolute;left:883.2px;top:391.04px;font-size:12px;line-height:12px;color:#ececec;white-space:nowrap;transform:scaleX(0.9077);transform-origin:0 0;z-index:11;">0273943364</div>
<div id="t64" style="position:absolute;left:883.2px;top:417.84px;font-size:12px;line-height:12px;color:#f2f2f2;font-weight:bold;white-space:nowrap;z-index:11;">Процентный</div>
<div id="t65" style="position:absolute;left:883.2px;top:435.04px;font-size:12px;line-height:12px;color:#ececec;white-space:nowrap;transform:scaleX(0.9077);transform-origin:0 0;z-index:11;">0273943364</div>
<div id="t66" style="position:absolute;left:883.2px;top:461.84px;font-size:12px;line-height:12px;color:#f2f2f2;font-weight:bold;white-space:nowrap;z-index:11;">Дробный</div>
<div id="t67" style="position:absolute;left:883.2px;top:479.04px;font-size:12px;line-height:12px;color:#ececec;white-space:nowrap;transform:scaleX(0.9077);transform-origin:0 0;z-index:11;">0273943364</div>
<div id="t68" style="position:absolute;left:883.2px;top:505.84px;font-size:12px;line-height:12px;color:#f2f2f2;font-weight:bold;white-space:nowrap;transform:scaleX(0.9862);transform-origin:0 0;z-index:11;">Экспоненциальный</div>
<div id="t69" style="position:absolute;left:883.2px;top:523.04px;font-size:12px;line-height:12px;color:#ececec;white-space:nowrap;transform:scaleX(0.9077);transform-origin:0 0;z-index:11;">0273943364</div>
<div id="t70" style="position:absolute;left:883.2px;top:549.84px;font-size:12px;line-height:12px;color:#f2f2f2;font-weight:bold;white-space:nowrap;transform:scaleX(1.0130);transform-origin:0 0;z-index:11;">Текстовый</div>
<div id="t71" style="position:absolute;left:883.2px;top:567.04px;font-size:12px;line-height:12px;color:#ececec;white-space:nowrap;transform:scaleX(0.9077);transform-origin:0 0;z-index:11;">0273943364</div>
<div id="t72" style="position:absolute;left:863.2px;top:594.04px;font-size:12px;line-height:12px;color:#f0f0f0;white-space:nowrap;z-index:11;">Другие числовые форматы...</div>
<div style="position:absolute;left:826px;top:102px;width:226px;height:515px;z-index:9;background:rgba(0,0,0,0.05);filter:blur(2px)"></div>
<div style="position:absolute;left:829px;top:100px;width:220px;height:514px;z-index:10;background:#333333;box-sizing:border-box;border:1px solid #595959"></div>
<div style="position:absolute;left:831px;top:542px;width:216px;height:45px;z-index:10;background:#505050"></div>
<svg style="left:836px;top:106px;z-index:11;" width="24" height="20" viewBox="0 0 24 20"><path d="M6.8 19.8A8.8 8.8 0 1 1 19.2 17.4" fill="none" stroke="#3a96dd" stroke-width="1.3"/><path d="M11.3 8V13.3H15.7" fill="none" stroke="#cdcdcd" stroke-width="1.2"/></svg>
<svg style="left:838px;top:202px;z-index:11;" width="33" height="28" viewBox="0 0 33 28"><rect x="1.4" y="1.6" width="27.6" height="17.1" fill="none" stroke="#cdcdcd" stroke-width="1.1"/><path d="M7.9 3.7H3.8V16.1H7.9M22.3 3.7H26.4V16.1H22.3" fill="none" stroke="#cdcdcd" stroke-width="1.1"/><ellipse cx="15" cy="9.9" rx="4.6" ry="6.3" fill="none" stroke="#cdcdcd" stroke-width="1.1"/><path d="M17 13.7V24.4C17 25.7 20.5 26 24 26C27.5 26 31 25.7 31 24.4V13.7Z" fill="#333" stroke="#f0c860" stroke-width="1.1"/><path d="M17 16.07C17 17.38 20.5 17.97 24 17.97C27.5 17.97 31 17.38 31 16.07" fill="none" stroke="#f0c860" stroke-width="1.1"/><path d="M17 19.15C17 20.45 20.5 21.05 24 21.05C27.5 21.05 31 20.45 31 19.15" fill="none" stroke="#f0c860" stroke-width="1.1"/><path d="M17 22.23C17 23.53 20.5 24.12 24 24.12C27.5 24.12 31 23.53 31 22.23" fill="none" stroke="#f0c860" stroke-width="1.1"/><ellipse cx="24" cy="13.7" rx="7" ry="2.2" fill="#e8a030" stroke="#f0c860" stroke-width="1.1"/></svg>
<svg style="left:838px;top:240px;z-index:11;" width="33" height="34" viewBox="0 0 33 34"><rect x="5.6" y="2.4" width="18" height="27.2" fill="none" stroke="#cdcdcd" stroke-width="1.1"/><rect x="8" y="5" width="12.8" height="4.6" fill="#7a7a7a" stroke="#9a9a9a" stroke-width="0.8"/><g fill="#cdcdcd"><rect x="9" y="12.7" width="2.2" height="2.2"/><rect x="13.5" y="12.7" width="2.2" height="2.2"/><rect x="18" y="12.7" width="2.2" height="2.2"/><rect x="9" y="17.8" width="2.2" height="2.2"/><rect x="13.5" y="17.8" width="2.2" height="2.2"/><rect x="9" y="22.9" width="2.2" height="2.2"/><rect x="13.5" y="22.9" width="2.2" height="2.2"/></g><path d="M16.8 19.3V29.9C16.8 31.2 20.3 31.5 23.8 31.5C27.3 31.5 30.8 31.2 30.8 29.9V19.3Z" fill="#333" stroke="#f0c860" stroke-width="1.1"/><path d="M16.8 21.65C16.8 22.95 20.3 23.55 23.8 23.55C27.3 23.55 30.8 22.95 30.8 21.65" fill="none" stroke="#f0c860" stroke-width="1.1"/><path d="M16.8 24.70C16.8 26.00 20.3 26.60 23.8 26.60C27.3 26.60 30.8 26.00 30.8 24.70" fill="none" stroke="#f0c860" stroke-width="1.1"/><path d="M16.8 27.75C16.8 29.05 20.3 29.65 23.8 29.65C27.3 29.65 30.8 29.05 30.8 27.75" fill="none" stroke="#f0c860" stroke-width="1.1"/><ellipse cx="23.8" cy="19.3" rx="7" ry="2.2" fill="#e8a030" stroke="#f0c860" stroke-width="1.1"/></svg>
<svg style="left:838px;top:285px;z-index:11;" width="30" height="30" viewBox="0 0 30 30"><rect x="1.4" y="3.2" width="27.6" height="25.6" fill="none" stroke="#cdcdcd" stroke-width="1.1"/><path d="M1.4 8.3H29M6.3 0.8V5.8M23.6 0.8V5.8" fill="none" stroke="#cdcdcd" stroke-width="1.1"/><rect x="10" y="16.8" width="2.2" height="2.2" fill="#e6e6e6"/></svg>
<svg style="left:838px;top:329px;z-index:11;" width="30" height="30" viewBox="0 0 30 30"><rect x="1.4" y="3.2" width="27.6" height="25.6" fill="none" stroke="#cdcdcd" stroke-width="1.1"/><path d="M1.4 8.3H29M6.3 0.8V5.8M23.6 0.8V5.8" fill="none" stroke="#cdcdcd" stroke-width="1.1"/><rect x="10" y="16.8" width="2.2" height="2.2" fill="#e6e6e6"/></svg>
<svg style="left:838px;top:373px;z-index:11;" width="30" height="30" viewBox="0 0 30 30"><circle cx="15" cy="15" r="13.8" fill="none" stroke="#cdcdcd" stroke-width="1.1"/><path d="M14.5 5.6V16.5H23.3" fill="none" stroke="#cdcdcd" stroke-width="1.1"/></svg>
<svg style="left:838px;top:418px;z-index:11;" width="30" height="28" viewBox="0 0 30 28"><ellipse cx="7.7" cy="7.4" rx="4.6" ry="5" fill="none" stroke="#cdcdcd" stroke-width="1.3"/><ellipse cx="22" cy="20" rx="4.6" ry="5" fill="none" stroke="#cdcdcd" stroke-width="1.3"/><path d="M7.6 25L22.6 2" stroke="#cdcdcd" stroke-width="1.3"/></svg>
<div style="position:absolute;left:884.3px;top:605px;width:4.5px;height:1px;background:#e0e0e0;z-index:11"></div>
<svg style="left:0px;top:0px;z-index:11;" width="1143" height="636" viewBox="0 0 1143 636"><path d="M842.80 127.80L846.30 125.20V137.70" fill="none" stroke="#cfcfcf" stroke-width="1.25"/><path d="M850.52 127.70C851.80 124.95 857.96 124.70 857.80 128.70C857.64 131.45 854.60 134.20 850.20 137.70H858.20" fill="none" stroke="#cfcfcf" stroke-width="1.25"/><path d="M860.14 126.20C862.13 124.70 866.75 124.95 866.60 128.32C866.39 130.82 864.26 131.07 861.99 131.07C864.97 131.07 867.10 132.08 867.10 134.45C867.10 138.07 862.49 138.32 860.00 136.70" fill="none" stroke="#cfcfcf" stroke-width="1.25"/><path d="M842.80 163.00L848.20 159.20V176.60" fill="none" stroke="#cfcfcf" stroke-width="1.25"/><path d="M853.61 162.68C855.26 158.85 863.19 158.50 862.99 164.07C862.78 167.90 858.87 171.73 853.20 176.60H863.50" fill="none" stroke="#cfcfcf" stroke-width="1.25"/><path d="M844.20 466.70L848.00 464.20V475.90" fill="none" stroke="#cfcfcf" stroke-width="1.25"/><path d="M845.6 487.8L853.7 466" fill="none" stroke="#cfcfcf" stroke-width="1.25"/><path d="M854.38 478.52C855.90 475.97 863.22 475.74 863.02 479.45C862.84 482.00 859.23 484.55 854.00 487.80H863.50" fill="none" stroke="#cfcfcf" stroke-width="1.25"/><path d="M839.00 516.40L843.50 513.60V528.90" fill="none" stroke="#cfcfcf" stroke-width="1.25"/><path d="M852.9 510.7C860.5 510.7 860.5 528.9 852.9 528.9C845.3 528.9 845.3 510.7 852.9 510.7Z" fill="none" stroke="#cfcfcf" stroke-width="1.25"/><path d="M861.43 508.42C862.36 506.31 866.83 506.12 866.71 509.19C866.59 511.30 864.39 513.41 861.20 516.10H867.00" fill="none" stroke="#cfcfcf" stroke-width="1.25"/><path d="M840.2 562C842.5 559.3 849.1 559.2 849.1 564.5V575.5M849.1 567.4C845 567.3 839.2 567.4 839.2 571.6C839.2 576.2 846.5 576.4 849.1 572.2" fill="none" stroke="#cfcfcf" stroke-width="1.25"/><path d="M854.4 552.9V575.5M854.4 563.5C855.5 560.5 858 559.8 860.5 559.8C864.5 559.8 866.6 563.2 866.6 567.6C866.6 572.3 864.2 575.6 860.5 575.6C857.6 575.6 855.3 574 854.4 571.5" fill="none" stroke="#cfcfcf" stroke-width="1.25"/></svg>
<svg style="left:0px;top:0px;z-index:20;" width="1143" height="636" viewBox="0 0 1143 636"><path d="M329.7 275.4L259.5 295.8" stroke="#ff0000" stroke-width="3.2" stroke-linecap="round"/><path d="M247.9 299.3L260.6 291.2L263.2 299.7Z" fill="#ff0000" stroke="#ff0000" stroke-width="1" stroke-linejoin="round"/><path d="M767.9 505.5L861.5 546.3" stroke="#ff0000" stroke-width="3.2" stroke-linecap="round"/><path d="M873.2 551.7L861.3 542.8L858.2 549.6Z" fill="#ff0000" stroke="#ff0000" stroke-width="1" stroke-linejoin="round"/></svg>
</body></html>
